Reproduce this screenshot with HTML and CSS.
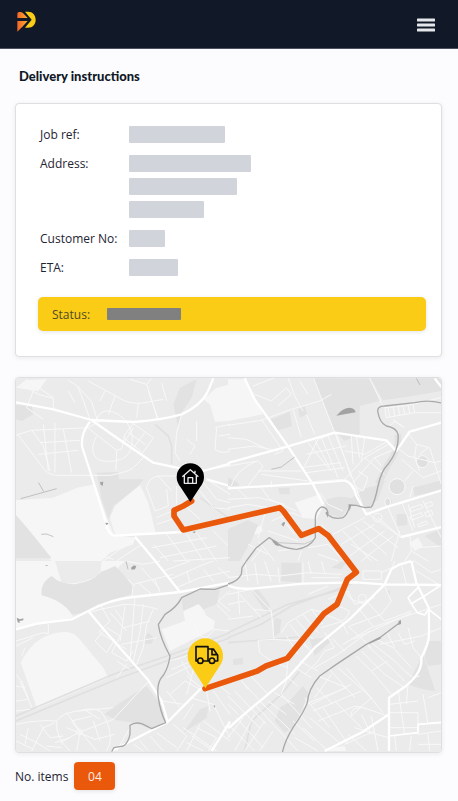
FILE: index.html
```html
<!DOCTYPE html>
<html lang="en">
<head>
    <meta charset="UTF-8">
    <meta name="viewport" content="width=device-width, initial-scale=1.0">
    <title>Delivery instructions</title>
    <link rel="stylesheet" href="styles.css">
</head>
<body>
    <header class="topbar">
        <a href="#" class="logo" aria-label="Home">
            <svg width="20" height="22" viewBox="0 0 60 66">
                <defs>
                    <linearGradient id="logoOrange" x1="0" y1="0" x2="1" y2="0">
                        <stop offset="0" stop-color="#f4642a"/>
                        <stop offset="1" stop-color="#fdb02c"/>
                    </linearGradient>
                </defs>
                <path d="M4 9Q4 3 9 3H14Q19 3 23 8L35 21H4Z" fill="url(#logoOrange)"/>
                <path d="M4 30H35L22 44Q19 48 15 51L4 62Z" fill="url(#logoOrange)"/>
                <path d="M27 2H36C50 2 59 12 59 26S50 50 36 50H27L47 26Z" fill="#facc15"/>
            </svg>
        </a>
        <button type="button" class="menu-btn" aria-label="Menu">
            <svg width="18" height="16" viewBox="0 0 18 16">
                <path d="M1 3H17M1 8H17M1 13H17" stroke="#e5e7eb" stroke-width="3" stroke-linecap="round"/>
            </svg>
        </button>
    </header>

    <main class="container">
        <h1>Delivery instructions</h1>

        <section class="card details">
            <dl class="detail-list">
                <dt>Job ref:</dt>
                <dd><span class="bar bar-ref"></span></dd>
                <dt>Address:</dt>
                <dd>
                    <span class="bar bar-line1"></span>
                    <span class="bar bar-line2"></span>
                    <span class="bar bar-line3"></span>
                </dd>
                <dt>Customer No:</dt>
                <dd><span class="bar bar-customer"></span></dd>
                <dt>ETA:</dt>
                <dd><span class="bar bar-eta"></span></dd>
            </dl>
            <div class="status">
                <span>Status:</span>
                <span class="status-value"></span>
            </div>
        </section>

        <section class="card map-card">
            <svg class="map" viewBox="48 21 1275 1122" role="img" aria-label="Delivery route map">
                <!-- north west -->
                <g>
                    <path class="pale" d="M48 388L160 380L232 350L285 340L320 440L342 492L405 500L400 520L330 545L305 570H155L100 505L48 435ZM330 440L345 405L420 342L445 395L468 490L345 492ZM48 50L75 28L140 25L115 60L75 55ZM650 50L690 40V150L645 152L630 100L610 85Z"/>
                    <path class="park" d="M290 305L355 303L357 325L430 325L415 345L340 405L325 445L305 385ZM48 432L85 475L155 562H48ZM540 50L590 25L575 80L545 125L535 170L520 100ZM48 102L95 104L100 130L65 150L48 145Z"/>
                    <path class="rail" d="M465 160L505 195L515 225V280M600 380L685 440"/>
                    <path class="road-sm" d="M75 45L115 70L160 82V115M80 25L160 80M205 28L232 45L275 92L292 148M232 45L245 75L270 145M48 192L95 178L265 170M55 192L135 298Q150 313 175 313H330Q385 303 400 290L430 260M95 178L130 225L150 300M130 160L145 300M165 155V305M190 175L215 305M115 250L235 238M120 215L240 208M265 172L350 238L365 234L375 190L400 158M300 150L265 170M350 238L348 298M290 195C270 230 275 265 310 270C355 275 390 260 395 225C405 165 365 125 325 120Q300 118 290 145M370 200L425 242M385 185L435 220M400 158L460 200L425 250M372 215L400 170M400 230L435 185M265 30L375 90Q410 102 445 93L490 85M390 25L440 40L473 145M440 40L455 22M445 60L475 145M485 35L500 90M415 95L410 140M315 60L300 90M345 75L325 130M225 95L205 60M100 60L80 110L130 145"/>
                    <path class="road-sm" d="M545 130L530 185L525 245L540 270M645 170L690 160M650 170L645 235Q665 250 690 240M690 190L655 195M560 205L585 225L570 250M590 150V210M440 350Q445 320 475 315H530M440 350L465 420L505 405L500 355M475 315L515 360M470 440L540 410M470 460L530 440M530 345V400M550 400L600 445M610 335L650 385L690 395M620 325L690 370M600 360L640 410L690 415M590 300L690 285M460 520L505 570M500 490L560 570M560 490L610 570M590 485L650 570M455 530L620 500M480 560L650 525M640 480L690 530M410 500L310 570M425 520L350 570M290 550L340 565"/>
                    <path class="road" d="M48 94L160 115L275 147L400 153Q480 148 545 130Q600 105 622 65L640 22M275 148L350 200L460 275L530 290L610 300L690 278M620 325L690 345M270 152Q240 190 247 230L270 300L318 455Q325 492 345 494L545 483L640 460M405 497L466 570"/>
                    <path class="rail-line" d="M62 383L170 353M116 335L131 362M124 490L140 489L160 497"/>
                    <path class="dark" d="M300 333L310 332L308 345L302 341ZM315 455L326 456L320 463ZM577 483L587 481L584 487Z"/>
                </g>
                <!-- north east -->
                <g transform="translate(684 0)">
                    <path class="pale" d="M0 25H50L105 130L0 150ZM200 395L275 370L290 400L265 445L225 440ZM310 82L340 70L347 85L317 97ZM350 60L362 55L380 82L365 88ZM385 50L410 37L418 51L390 65ZM390 72L420 60L425 73L400 85ZM75 475L98 463L105 480L82 492ZM545 515L570 500L585 525L560 540Z"/>
                    <path class="park" d="M255 22L425 23L455 90L395 105V190L350 210L320 180ZM130 145L185 122L192 165L145 180ZM210 115L230 105L238 130L215 140ZM427 22H640V60L555 75L465 88ZM555 350L640 328V360L560 374ZM290 390Q330 370 370 382L415 350L440 345L470 330L450 385L420 410L365 402L340 440L300 430ZM0 475L60 447L90 462L70 510L35 570H0ZM505 430L537 428L538 462L508 465ZM150 350L185 350V370L155 370ZM0 320Q25 325 35 345H0ZM590 495L610 485L640 475V530Z"/>
                    <circle class="park" cx="507" cy="347" r="23"/>
                    <circle class="park" cx="583" cy="272" r="17"/>
                    <circle class="park" cx="480" cy="392" r="11"/>
                    <path class="river-bank" d="M510 190Q515 235 480 280L450 340"/>
                    <path class="road-sm" d="M0 163L100 148L190 115L275 90L310 70M75 45L140 20M80 70L130 90L175 50L190 70L150 105M180 20L200 75L225 120M215 30L240 70M235 130L260 190M195 115L220 200M100 145L165 240L140 250M0 200L55 205L120 235M0 235L80 225L150 240M0 285L90 270L105 285L60 345M10 345Q20 300 85 270M100 350L125 385L205 420M100 310L240 330M90 300L220 300M130 330V350M220 290L340 275M235 305L350 290M230 285L270 205L310 190M240 215L300 290M260 205L310 300M280 200L330 320M300 195L345 300M325 188L370 320M370 195L375 280M385 195L395 260M410 200L400 270M235 250L355 225M350 240L410 250L480 210M350 325L410 260L490 215M375 335L440 260L500 235M410 260L470 310M390 300L420 320L405 360L380 345M440 260L460 285M425 22L458 90M455 90L470 110L530 105L640 80M470 105L475 140L560 125L640 125M480 108L485 138M495 105L500 135M510 105L515 132M525 105L530 130M540 103L545 127M555 100L560 125M495 145L520 165M480 170L500 150L530 170M500 225L540 255L620 275L640 270M540 185L565 220L605 230L640 340M565 220L560 260L575 300M600 230L575 250M520 265L585 320L640 300M555 345L545 380M555 300L530 330M585 390L640 500M540 400L560 470M480 410L520 500M520 390L555 480M450 440L520 500M545 412L580 400L585 410L550 422ZM590 400L610 392L615 402L595 410ZM545 438L580 425L585 435L550 448ZM590 425L610 418L615 430L595 438ZM570 460L595 450L600 458L572 468ZM515 480L490 570M545 490L550 540L600 570M550 540L530 570M570 530L640 525"/>
                    <path class="road-sm" d="M275 365L300 400L345 420M0 385L95 380L170 400M30 355L60 385M0 410L60 400L120 410M110 430L90 500M130 450L190 425L230 440M160 440L200 490M120 480L210 510M90 510L140 570M60 520L120 550M100 535L70 570M150 540L220 530L260 500M220 540L210 570M240 530L300 520L350 570M280 460L340 530M315 490L410 440M340 520L440 460M365 555L470 480M345 480L430 570M380 465L475 550M405 450L510 530M400 570L495 495M270 550L330 570M370 520L450 570"/>
                    <circle class="road-sm" cx="507" cy="347" r="24"/>
                    <circle class="road-sm" cx="583" cy="272" r="18"/>
                    <circle class="road-sm" cx="449" cy="440" r="13"/>
                    <ellipse class="road-sm" cx="479" cy="393" rx="9" ry="12"/>
                    <path class="road-sm" d="M257 22L320 185L375 325L410 420L520 500"/>
                    <path class="road" d="M0 276L180 226L320 185L475 208L505 240L545 182L640 155M50 22L80 85L180 226L255 340L285 400M0 352L240 338L350 328Q375 335 385 375L415 430L470 410L640 358M520 498L640 468M620 22L640 48"/>
                    <path class="road-sm" d="M250 332L352 325Q380 335 392 375"/>
                    <path class="river" d="M640 96Q600 85 560 95L470 105Q445 105 450 125Q455 155 475 165Q505 170 510 190Q515 235 480 280Q460 300 450 345Q440 395 430 408L410 410L385 403L365 402Q360 430 345 440Q320 447 300 432Q300 408 280 408Q260 420 262 450V500Q245 530 205 535Q155 530 140 510L123 500L85 530L55 570"/>
                    <path class="rail-line" d="M130 295L160 288L200 258M565 22L576 42"/>
                    <path class="thin" d="M150 515L230 519L260 505"/>
                    <path class="dark" d="M325 134Q345 110 365 110Q380 111 383 124ZM130 507L148 512L153 526L142 522ZM160 460L168 452L172 455L166 467ZM361 400L370 403L365 420ZM292 425L300 420V440Z"/>
                </g>
                <!-- south west -->
                <g transform="translate(0 570)">
                    <path class="pale" d="M48 0H165L185 65Q240 75 300 40L305 0H375L350 25L300 30L285 60L215 160L220 168L190 180L48 200ZM62 305Q100 230 165 217Q215 205 235 230L310 320L325 350L110 443L100 410ZM485 205L555 180L550 150L600 128L620 165L645 180L640 205L510 270Z"/>
                    <path class="park" d="M155 45Q180 70 225 70Q280 60 300 35L345 15L370 40L400 80L395 100L300 130L265 155L215 160Q190 120 125 103Q120 65 155 45ZM313 460L360 425L440 375L490 440L495 485L455 503L400 485L350 478ZM545 115L590 87L660 85L650 130L610 145L595 128L550 150ZM432 230L445 215L462 230L455 248L435 248ZM550 515L600 445L625 435L620 470Z"/>
                    <path class="rail" d="M48 465L340 340L530 275L690 215M48 480L350 355L540 285L690 230"/>
                    <path class="road-sm" d="M48 240L130 215L145 218V190M48 255L100 230M75 260L65 285M48 340L65 360L95 440M48 375L75 380M48 420L85 415L60 360M48 450L90 445M48 490Q120 475 170 480Q165 530 210 570M170 480Q185 455 235 450L340 440M235 450Q300 430 315 470Q345 530 320 570M95 570L130 500L165 485M48 540L100 565M60 520L110 545L150 570M200 455L240 510L290 570M180 545L235 515L340 475M230 570L240 515L215 480L275 465M200 500L285 535L345 520M165 545L210 530M280 480L300 540M260 450L300 475M120 490L150 530L190 525M85 500L75 550M140 555L185 560M340 475L445 362M390 500L350 570"/>
                    <circle class="road-sm" cx="238" cy="513" r="9"/>
                    <path class="road-sm" d="M395 110L400 70L520 40M400 70L385 55M415 65L455 100M465 55L480 95M425 20L480 85M375 0L430 10L480 0M520 0L690 -10M490 30L570 0M510 55L600 15L640 0M530 80L600 50L690 30M560 30L570 65M610 25L640 60M655 20L690 50M365 130Q430 130 475 145M270 155L300 145L375 130M300 130L330 180L295 215M330 155L380 210M345 145L370 180M375 135L360 240M405 105L390 300M430 130L420 210L400 300M460 145L440 190L430 260L410 310M315 205L285 240L320 275L345 235M320 200L360 225L335 275L380 300L400 270M300 215L330 235M345 245L380 265M350 350L380 310M350 300L390 325M370 200L450 180M365 250L470 230M550 180L585 220L620 230L645 205M570 170L600 225M690 90L655 120L690 150M650 130L690 170M640 205L690 210M505 300L545 290L640 250M515 325L600 290M500 350L570 315M545 300L570 345M590 290L560 400M560 345L610 385M600 385L555 360L510 400M490 420L550 430M500 390L540 440M570 410L640 430L690 530M620 390L630 450M640 390L690 460M660 375L690 400M580 430L550 475M520 490L560 525L530 570M550 500L650 570M600 490L560 570M590 500L650 530L625 570M575 525L640 570M560 545L610 570M610 480L690 540M400 550L430 570M450 525L490 570M470 515L530 560M420 540L445 570"/>
                    <path class="road" d="M48 205L110 188L215 175L265 150Q330 115 400 108L540 93L690 65M466 0L540 93M265 150L320 215L445 358L485 420L503 483M335 570L503 483L600 385L615 383M690 482L635 570"/>
                    <path class="river" d="M690 70L645 85L600 84L545 110Q530 140 495 160L475 190Q480 230 510 285Q505 320 490 343Q468 365 475 410Q480 450 497 485L455 503L425 488Q405 482 390 493V520Q385 545 370 555L342 560L335 572"/>
                    <path class="rail-line" d="M378 0L384 25"/>
                    <path class="dark" d="M50 170L60 175L70 172V178L58 180L60 186L53 184ZM393 20L402 13L409 16L405 25L395 26ZM135 12L145 13L140 15ZM640 432L646 435L644 441Z"/>
                </g>
                <!-- south east -->
                <g transform="translate(684 570)">
                    <path class="pale" d="M192 413L210 397L223 411L207 429ZM206 438L215 420L231 432L220 447ZM145 463L158 454L168 467L154 475ZM310 560L350 555L355 570H300Z"/>
                    <path class="park" d="M160 5H220V65L160 60ZM140 170L160 175L155 215L135 230ZM245 235L295 230L310 240L260 285ZM155 440L180 425L225 375L240 395L225 440L195 500L170 515L140 480ZM540 370L585 280L622 390Q575 385 540 370ZM600 240H640V310L600 315L590 290ZM310 20L340 2L360 0L340 25ZM15 295L45 290V310L15 312ZM70 90L90 85L125 130V155L110 150ZM475 90L487 88L485 108Z"/>
                    <path class="rail" d="M0 230L100 190L190 135L380 65M0 215L180 130L340 85M0 245L130 235L250 225M215 330L160 400L70 480L50 570"/>
                    <path class="road-sm" d="M50 0L60 60M80 5L90 70M110 0L130 60M150 20L155 65M0 50L80 40L150 45M155 45L240 35L340 40M240 0L250 40M280 0L290 35M225 5V65M250 50L335 50M0 100L70 85L130 150L138 235L90 238L95 275L130 300L180 320M30 80L35 160M0 130L50 120M0 175L75 165M35 100L100 170M130 150L75 145M138 235L215 240L255 275M175 225L210 280M160 215L180 185L250 145L290 155M185 190L240 260M205 175L255 235M225 160L270 215M250 145L285 190M320 130L365 150Q355 180 330 185L280 200M290 160L340 180L360 220M300 115L360 90L380 130L440 110M340 75L370 115L410 130M240 100L300 75M405 30H460V55H405ZM460 35L490 20L560 0M500 0L490 30M520 10L535 70M560 0L610 35L640 25M565 30L640 75M420 125L470 180L550 150M470 75L490 120L460 160L365 195M390 140L435 195M360 195L430 260M375 235L550 155M345 250L430 200L640 130M290 215L320 260L290 270L270 300M315 235L350 270M260 320L330 280L425 210M430 245L500 300L530 330L555 350M445 235L495 260L550 320M455 250L580 225L640 200M510 215L530 250L560 240M540 200L555 260L580 290M475 210L500 260M420 255L490 320L530 360M400 270L470 340L530 380M385 285L430 330L480 300M430 330L490 400M355 320L465 455M330 320L430 410L370 465M310 340L260 410M270 345L355 380L230 430M300 320L380 410M230 410L305 500M250 430L370 370M265 380L315 430M285 440L360 550M320 420L400 500M255 450L400 390M270 480L370 440Q380 430 420 445L480 465M370 465Q365 440 400 440M245 470L340 550M225 500L300 570M200 530L270 570M195 480L260 540M400 460L430 520M430 465L450 570M380 500L480 530M360 520L415 570M350 550L440 510"/>
                    <path class="road-sm" d="M485 430L570 420M485 455H570M510 385L530 520M540 370L535 430M485 500H570M570 455V520L640 510M570 490L640 482M585 400L600 490M500 525L505 570M550 525L545 570M600 520L605 570M570 550H640M600 410L640 395M555 350L575 345M180 295L175 360L160 400L250 500M80 430L210 570M95 420L200 520M0 405L95 500M20 390L115 490M50 370L115 440M0 430L30 460M25 470L105 560M0 490L80 570M45 470L0 530M80 460L20 570M110 480L50 570M135 510L95 570M120 420L175 460M180 350L210 375M140 395L200 430M60 335L120 400M30 345L60 385M200 320L250 350M215 300L270 330M230 340L270 300"/>
                    <circle class="road-sm" cx="403" cy="112" r="12"/>
                    <path class="road" d="M0 73Q30 87 80 82L225 68L385 64L465 70L640 72M550 0L565 65L602 140Q605 230 600 240Q598 255 580 290Q585 340 520 385L483 410V570M470 70L490 25L515 10L550 0M470 70L370 170L260 260L180 350L60 450L0 502M483 460L400 515L290 570"/>
                    <path class="road-mid" d="M640 72L600 98L550 128L568 155L590 162L602 145L640 175M550 128L540 110L570 80M483 525L570 515V490L640 485"/>
                    <path class="river" d="M0 68Q25 65 40 40L42 20L55 0M515 185L455 230L415 250L325 310L275 345Q240 385 238 425Q230 450 195 500Q170 540 163 575"/>
                    <path class="dark" d="M512 180L519 177V189L510 192ZM422 245L458 227V233L425 248Z"/>
                </g>

                <path class="route" d="M575 390L550 405L522 418V435L550 477L839 410L850 420L904 493L956 473L984 493L1069 604L1042 625L1011 700L972 728L862 862L798 885L772 900L615 953"/>

                <!-- destination pin -->
                <g transform="translate(571 393)">
                    <path d="M0 0L-29 -44Q-41 -59 -41 -75A41 41 0 1 1 41 -75Q41 -59 29 -44Z"/>
                    <path class="home-icon" d="M-24 -76L0 -97L24 -76M-18 -80V-56H18V-80M-7 -56V-73H7V-56M14 -94V-87"/>
                </g>
                <!-- vehicle pin -->
                <g transform="translate(616 952)">
                    <path class="vehicle-pin" d="M0 0L-41 -64Q-53 -80 -53 -97A53 53 0 1 1 53 -97Q53 -80 41 -64Z"/>
                    <path class="truck-icon" d="M-23 -82H-28V-125H8V-82H-7M8 -118H24L37 -99V-82H29M11 -82H8M20 -116V-101H36"/>
                    <circle class="truck-icon" cx="-15" cy="-83" r="8"/>
                    <circle class="truck-icon" cx="20" cy="-83" r="8"/>
                </g>
            </svg>
        </section>

        <div class="items">
            <span>No. items</span>
            <button type="button" class="items-btn">04</button>
        </div>
    </main>
</body>
</html>
```
FILE: styles.css
```css
* {
    box-sizing: border-box;
}
body {
    margin: 0;
    background: #fcfcfe;
    color: #1f2433;
    font-family: "Open Sans", "Noto Sans", sans-serif;
    font-size: 12px;
    line-height: 17px;
}
.topbar {
    display: flex;
    justify-content: space-between;
    align-items: center;
    height: 49px;
    padding: 0 23px 0 16px;
    background: #111827;
    border-bottom: 1px solid #4b5161;
}
.logo,
.menu-btn svg {
    display: block;
}
.menu-btn {
    padding: 2px 0 0;
    border: none;
    background: none;
    cursor: pointer;
}
.container {
    padding: 18px 16px 12px 15px;
}
h1 {
    margin: 0 0 18px 4px;
    color: #111827;
    font-family: Lato, sans-serif;
    font-size: 13px;
    font-weight: 900;
    line-height: 18px;
}
.card {
    border: 1px solid #dfdfe1;
    border-radius: 4px;
    background: #fff;
    box-shadow: 0 1px 5px rgba(17, 24, 39, 0.08);
}
.details {
    padding: 22px 15px 25px 22px;
    margin-bottom: 20px;
}
.detail-list {
    display: grid;
    grid-template-columns: 89px 1fr;
    row-gap: 12px;
    margin: 0 0 21px;
    padding-left: 2px;
}
.detail-list dd {
    display: flex;
    flex-direction: column;
    gap: 6px;
    margin: 0;
}
.bar {
    height: 17px;
    border-radius: 1px;
    background: #d1d5db;
}
.bar-ref {
    width: 96px;
}
.bar-line1 {
    width: 122px;
}
.bar-line2 {
    width: 108px;
}
.bar-line3 {
    width: 75px;
}
.bar-customer {
    width: 36px;
}
.bar-eta {
    width: 49px;
}
.status {
    display: flex;
    align-items: center;
    gap: 17px;
    height: 34px;
    padding: 0 14px;
    border-radius: 5px;
    background: #facc15;
    box-shadow: 0 1px 4px rgba(17, 24, 39, 0.12);
    color: #4f4a2c;
}
.status-value {
    width: 74px;
    height: 12px;
    border-radius: 1px;
    background: #808080;
}
.map-card {
    overflow: hidden;
    margin-bottom: 9px;
}
.map {
    display: block;
    width: 100%;
    height: auto;
    background: #ebebeb;
}
.map path,
.map circle,
.map ellipse {
    stroke-linejoin: round;
}
.map .pale {
    fill: #f6f6f6;
}
.map .park {
    fill: #e2e2e2;
}
.map .dark {
    fill: #a3a3a3;
}
.map .road,
.map .road-mid,
.map .road-sm,
.map .rail,
.map .rail-line,
.map .river,
.map .river-bank,
.map .thin,
.map .route {
    fill: none;
}
.map .road {
    stroke: #fff;
    stroke-width: 7;
}
.map .road-mid {
    stroke: #fff;
    stroke-width: 5;
}
.map .road-sm {
    stroke: #f8f8f8;
    stroke-width: 3;
}
.map circle.park {
    fill: #e0e0e0;
}
.map .rail {
    stroke: #e0e0e0;
    stroke-width: 5;
}
.map .rail-line {
    stroke: #ababab;
    stroke-width: 2;
}
.map .river {
    stroke: #a9a9a9;
    stroke-width: 4;
}
.map .river-bank {
    stroke: #e2e2e2;
    stroke-width: 20;
}
.map .thin {
    stroke: #b5b5b5;
    stroke-width: 2;
}
.map .route {
    stroke: #ea580c;
    stroke-width: 17;
    stroke-linecap: round;
}
.home-icon {
    fill: none;
    stroke: #e5e7eb;
    stroke-width: 4;
}
.vehicle-pin {
    fill: #facc15;
}
.truck-icon {
    fill: #facc15;
    stroke: #111;
    stroke-width: 5;
}
.items {
    display: flex;
    align-items: center;
    gap: 6px;
}
.items-btn {
    width: 41px;
    height: 28px;
    padding: 0;
    border: none;
    border-radius: 4px;
    background: #ea580c;
    box-shadow: 0 1px 4px rgba(17, 24, 39, 0.12);
    color: #fdeee5;
    font: inherit;
    cursor: pointer;
}
```
